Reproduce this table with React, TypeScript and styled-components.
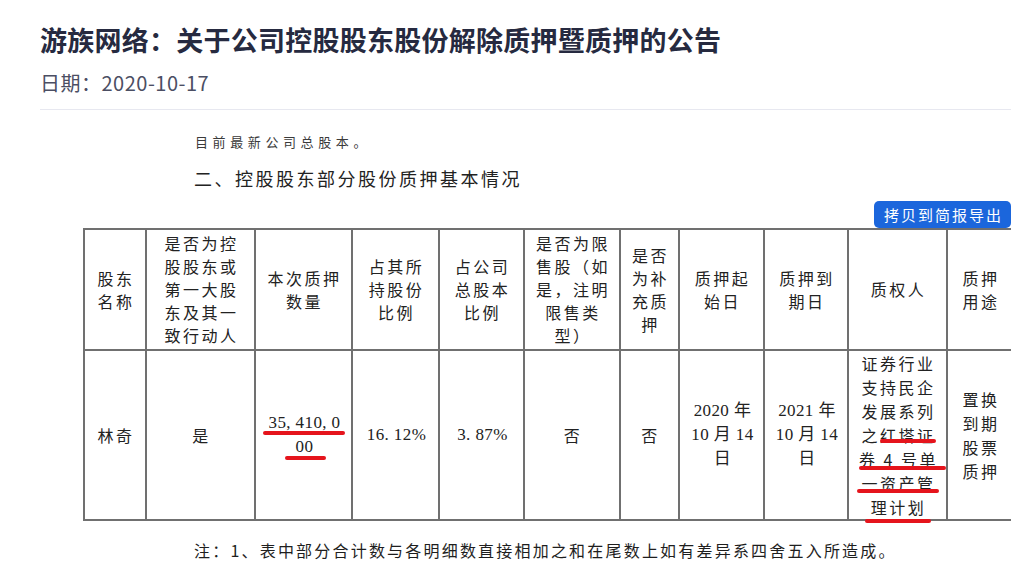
import React from "react";
import styled, { createGlobalStyle } from "styled-components";

const GlobalStyle = createGlobalStyle`
  html, body { margin: 0; padding: 0; background: #ffffff; }
  body { font-family: "Noto Sans CJK SC", "Noto Sans", sans-serif; overflow: hidden; }
`;

const Page = styled.div`
  width: 1011px;
  height: 573px;
  padding-left: 40px;
  box-sizing: border-box;
  overflow: hidden;
`;

const Header = styled.header`
  padding-top: 22px;
  padding-bottom: 12px;
  border-bottom: 1px solid #e7e8f0;
`;

const Title = styled.h1`
  margin: 0;
  font-size: 27px;
  line-height: 36px;
  font-weight: 700;
  color: #262a40;
  letter-spacing: 0.25px;
`;

const DateLine = styled.div`
  margin-top: 11px;
  font-size: 20px;
  line-height: 28px;
  color: #4b4e63;
  letter-spacing: 0.5px;
`;

const Doc = styled.section`
  display: flex;
  flex-direction: column;
`;

const Intro = styled.p`
  margin: 22px 0 0 155px;
  font-size: 13px;
  line-height: 20px;
  letter-spacing: 4.6px;
  color: #3a3a3a;
`;

const SectionTitle = styled.h2`
  margin: 13px 0 0 154px;
  font-size: 18px;
  line-height: 26px;
  font-weight: 400;
  letter-spacing: 2.5px;
  color: #222;
`;

const Toolbar = styled.div`
  display: flex;
  justify-content: flex-end;
  margin-top: 10px;
`;

const CopyButton = styled.button`
  height: 27px;
  padding: 0 8px 0 10px;
  border: none;
  border-radius: 5px;
  background: #1b66dc;
  color: #fff;
  font-family: "Noto Sans CJK SC", sans-serif;
  font-size: 15px;
  line-height: 27px;
  letter-spacing: 2px;
  cursor: pointer;
`;

const Table = styled.table`
  margin-left: 43px;
  border-collapse: collapse;
  table-layout: fixed;
  width: 929px;
  color: #222;
`;

const HeadCell = styled.th`
  height: 119px;
  padding: 0 0 0 2px;
  border: 2px solid #707070;
  font-weight: 400;
  font-size: 16px;
  line-height: 23px;
  letter-spacing: 2.5px;
  text-align: center;
  vertical-align: middle;
`;

const BodyCell = styled.td<{ $serif?: boolean }>`
  height: 168px;
  padding: 0 0 0 2px;
  border: 2px solid #707070;
  font-family: ${(p) =>
    p.$serif
      ? `"Liberation Serif", "Noto Sans CJK SC", serif`
      : `"Noto Sans CJK SC", sans-serif`};
  font-size: ${(p) => (p.$serif ? "17px" : "16px")};
  line-height: 24px;
  letter-spacing: ${(p) => (p.$serif ? "0.4px" : "2.5px")};
  text-align: center;
  vertical-align: middle;
`;

const Line = styled.span`
  display: block;
  white-space: nowrap;
`;

const Mark = styled.span<{ $l: number; $r: number; $dy: number }>`
  position: relative;
  &::after {
    content: "";
    position: absolute;
    left: ${(p) => -p.$l}px;
    right: ${(p) => -p.$r}px;
    top: calc(50% + ${(p) => p.$dy - 2}px);
    height: 4px;
    border-radius: 2px;
    background: #e5141c;
  }
`;

const Note = styled.p`
  margin: 17px 0 0 154px;
  font-size: 16px;
  line-height: 24px;
  letter-spacing: 2.2px;
  color: #1e1e1e;
  white-space: nowrap;
`;

const widths = [62, 109, 97, 87, 85, 96, 59, 85, 84, 99, 66];

const headers: string[][] = [
  ["股东", "名称"],
  ["是否为控", "股股东或", "第一大股", "东及其一", "致行动人"],
  ["本次质押", "数量"],
  ["占其所", "持股份", "比例"],
  ["占公司", "总股本", "比例"],
  ["是否为限", "售股（如", "是，注明", "限售类", "型）"],
  ["是否", "为补", "充质", "押"],
  ["质押起", "始日"],
  ["质押到", "期日"],
  ["质权人"],
  ["质押", "用途"],
];

const Lines = ({ items }: { items: string[] }) => (
  <>
    {items.map((t, i) => (
      <Line key={i}>{t}</Line>
    ))}
  </>
);

export default function App() {
  return (
    <>
      <GlobalStyle />
      <Page>
        <Header>
          <Title>游族网络：关于公司控股股东股份解除质押暨质押的公告</Title>
          <DateLine>日期：2020-10-17</DateLine>
        </Header>
        <Doc>
          <Intro>目前最新公司总股本。</Intro>
          <SectionTitle>二、控股股东部分股份质押基本情况</SectionTitle>
          <Toolbar>
            <CopyButton>拷贝到简报导出</CopyButton>
          </Toolbar>
          <Table>
            <colgroup>
              {widths.map((w, i) => (
                <col key={i} style={{ width: w }} />
              ))}
            </colgroup>
            <thead>
              <tr>
                {headers.map((h, i) => (
                  <HeadCell key={i}>
                    <Lines items={h} />
                  </HeadCell>
                ))}
              </tr>
            </thead>
            <tbody>
              <tr>
                <BodyCell>林奇</BodyCell>
                <BodyCell>是</BodyCell>
                <BodyCell $serif>
                  <Line>
                    <Mark $l={6} $r={4} $dy={10}>35, 410, 0</Mark>
                  </Line>
                  <Line>
                    <Mark $l={11} $r={13} $dy={11}>00</Mark>
                  </Line>
                </BodyCell>
                <BodyCell $serif>16. 12%</BodyCell>
                <BodyCell $serif>3. 87%</BodyCell>
                <BodyCell>否</BodyCell>
                <BodyCell>否</BodyCell>
                <BodyCell $serif>
                  <Lines items={["2020 年", "10 月 14", "日"]} />
                </BodyCell>
                <BodyCell $serif>
                  <Lines items={["2021 年", "10 月 14", "日"]} />
                </BodyCell>
                <BodyCell>
                  <Line>证券行业</Line>
                  <Line>支持民企</Line>
                  <Line>发展系列</Line>
                  <Line>
                    之<Mark $l={0} $r={0} $dy={6}>红塔证</Mark>
                  </Line>
                  <Line>
                    <Mark $l={0} $r={8} $dy={9}>券 4 号单</Mark>
                  </Line>
                  <Line>
                    <Mark $l={4} $r={3} $dy={8}>一资产管</Mark>
                  </Line>
                  <Line>
                    <Mark $l={6} $r={5} $dy={14}>理计划</Mark>
                  </Line>
                </BodyCell>
                <BodyCell>
                  <Lines items={["置换", "到期", "股票", "质押"]} />
                </BodyCell>
              </tr>
            </tbody>
          </Table>
          <Note>注：1、表中部分合计数与各明细数直接相加之和在尾数上如有差异系四舍五入所造成。</Note>
        </Doc>
      </Page>
    </>
  );
}
